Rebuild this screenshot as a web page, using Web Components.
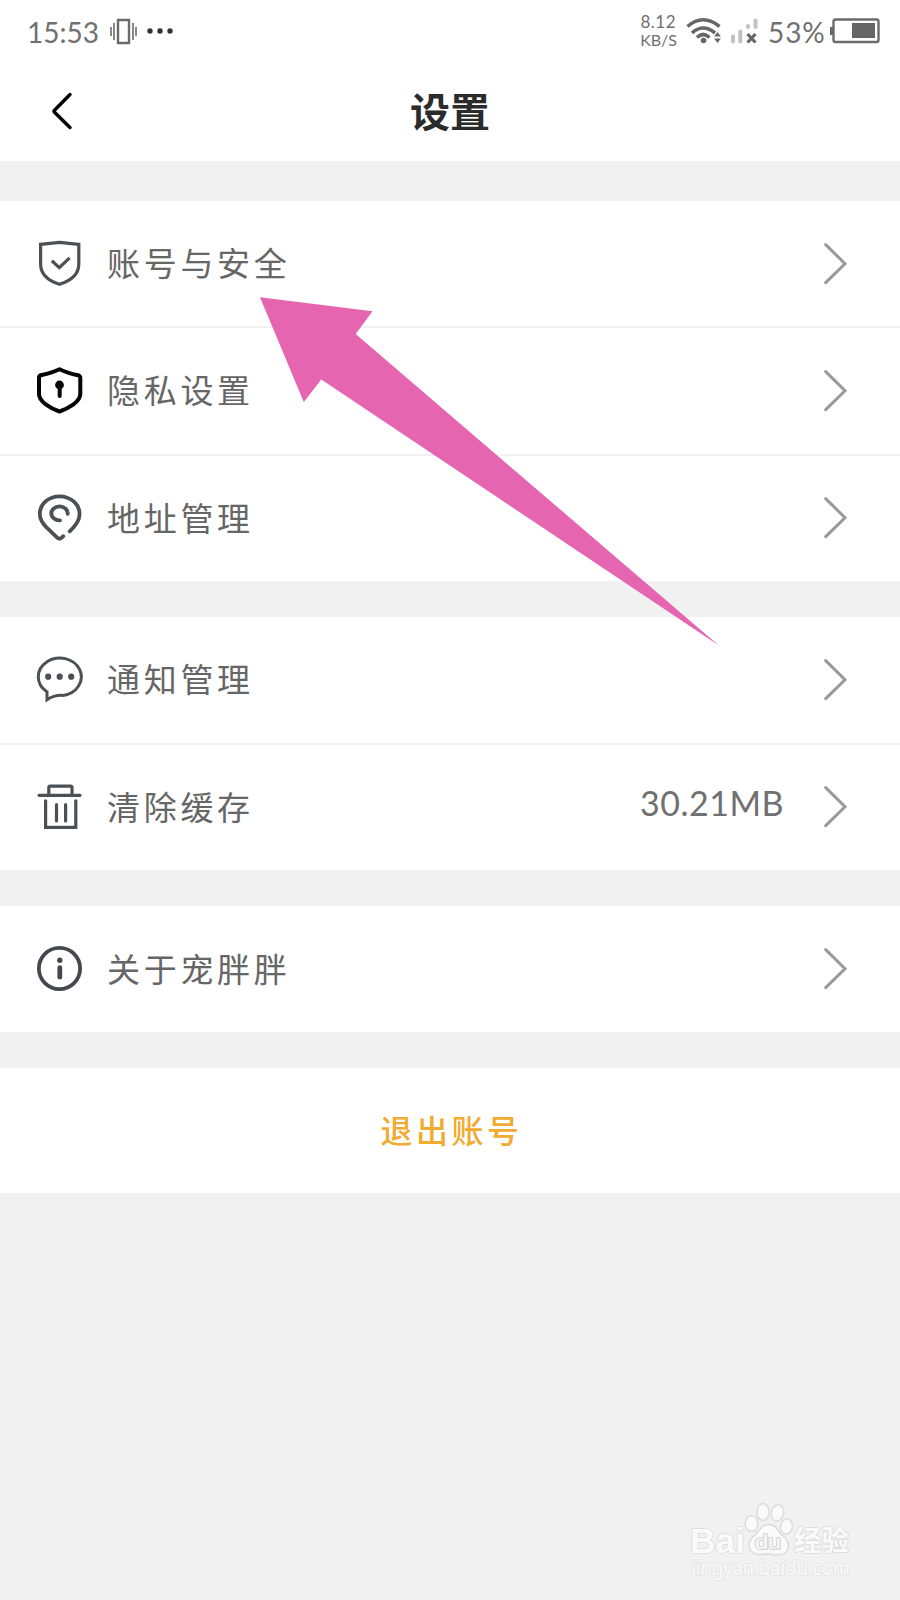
<!DOCTYPE html>
<html lang="zh-CN">
<head>
<meta charset="utf-8">
<title>设置</title>
<style>
    body {
        margin: 0;
        background: #f1f1f1;
        font-family: Lato, "Noto Sans CJK SC", sans-serif;
        color: #666;
    }
</style>
</head>
<body>
<settings-page>
    <status-bar slot="top" time="15:53" battery="53%"></status-bar>
    <nav-header slot="top">设置</nav-header>

    <settings-group style="height: 380px">
        <settings-row icon="shield">账号与安全</settings-row>
        <settings-row icon="lock">隐私设置</settings-row>
        <settings-row icon="pin">地址管理</settings-row>
    </settings-group>
    <settings-group style="height: 253px">
        <settings-row icon="chat">通知管理</settings-row>
        <settings-row icon="trash">清除缓存<span slot="value">30.21MB</span></settings-row>
    </settings-group>
    <settings-group style="height: 126px">
        <settings-row icon="info">关于宠胖胖</settings-row>
    </settings-group>
    <logout-button>退出账号</logout-button>

    <pointer-arrow slot="overlay"></pointer-arrow>
    <water-mark slot="overlay"></water-mark>
</settings-page>

<script>
const icons = {
    shield: `<g stroke="#4b5055" stroke-width="3.2"><path d="M4.6 5.3Q14 4.6 23.5 3.4Q33 4.6 42.8 5.3V25C42.8 36 34 42 23.5 45.3C13 42 4.6 36 4.6 25Z"/><path d="M15.8 21.8l7.5 6.8 10.3-9.8"/></g>`,
    lock: `<g stroke="#050505" stroke-width="4"><path stroke-linejoin="round" d="M23.5 3.2C17.5 6.2 10 8 4.8 9.2Q3 10 3 12V28C3 36 15 42.5 23.5 45.5C32 42.5 44.3 36 44.3 28V12Q44.3 10 42 9.2C36 8 29.5 6.2 23.5 3.2Z"/><path stroke-linecap="round" d="M23.7 20v10"/><circle cx="23.5" cy="19" r="2.4" fill="#050505"/></g>`,
    pin: `<g stroke="#4b5055" stroke-width="3.8" stroke-linecap="round"><path d="M27.3 43.2L25.3 45Q23.5 46.4 21.7 45L10 33.8C5.3 29 3.8 25.6 3.8 21C3.8 11 12.5 3.3 23.5 3.3S43.6 11 43.6 21C43.6 27.6 40 32.5 33.7 38.3"/><path d="M31.7 20.8A8.2 7 0 1 0 24 27.4"/></g>`,
    chat: `<g stroke="#4b5055" stroke-width="3"><path d="M10.5 36.6A21.5 18.8 0 1 1 27 40.4Q18.5 39.8 11 44.8V35.5"/></g><g fill="#4b5055"><circle cx="12.2" cy="21.7" r="3.1"/><circle cx="23.7" cy="21.7" r="3.1"/><circle cx="35.2" cy="21.7" r="3.1"/></g>`,
    trash: `<g stroke="#4b5055" stroke-width="3.2" stroke-linecap="round"><path d="M3 13.3H44M12.8 13V5.6Q12.8 4.2 14.2 4.2H34.5Q36 4.2 36 5.6V13M9.6 18.8V45.3H39.8V18.8M20.5 22.7V39M29.6 22.7V39"/></g>`,
    info: `<circle cx="23.5" cy="24.5" r="20.6" stroke="#43494f" stroke-width="3.8"/><circle cx="23.8" cy="16.2" r="2.7" fill="#43494f"/><path d="M23.8 23.7v9.5" stroke="#43494f" stroke-width="4.8" stroke-linecap="round"/>`
};

class SettingsPage extends HTMLElement {
    constructor() {
        super();
        this.attachShadow({ mode: 'open' });
        this.shadowRoot.innerHTML = `
            <style>
                :host {
                    display: block;
                    position: relative;
                    height: 1600px;
                    overflow: hidden;
                }
                main {
                    display: flex;
                    flex-direction: column;
                    gap: 36px;
                    padding-top: 40px;
                }
            </style>
            <slot name="top"></slot>
            <main><slot></slot></main>
            <slot name="overlay"></slot>
        `;
    }
}

class StatusBar extends HTMLElement {
    constructor() {
        super();
        this.attachShadow({ mode: 'open' });
        this.shadowRoot.innerHTML = `
            <style>
                :host {
                    display: flex;
                    align-items: center;
                    box-sizing: border-box;
                    height: 62px;
                    padding: 0 20px 0 27px;
                    background: #fff;
                    font-size: 28px;
                    color: #707070;
                }
                svg { display: block; flex: none; }
                .time { width: 82px; padding-top: 1px; box-sizing: border-box; white-space: nowrap; }
                .speed {
                    margin-left: auto;
                    width: 39px;
                    margin-right: 9px;
                    font-size: 16px;
                    line-height: 18px;
                    text-align: right;
                    white-space: nowrap;
                }
                .speed b { display: block; font-weight: 400; }
                .speed b:first-child { font-size: 17px; letter-spacing: 0.5px; margin-right: 1px; }
                .percent { width: 61px; margin-left: 10px; padding-top: 1px; letter-spacing: 0.9px; white-space: nowrap; }
            </style>
            <span class="time"></span>
            <svg width="66" height="28" viewBox="109 17 66 28" fill="none" stroke="#6b6b6b" stroke-width="2">
                <path d="M118 20h11v23h-11z" stroke-width="2.4"/>
                <path d="M111 27v9M114 23v17M133 23v17M136 27v9" stroke-width="1.6"/>
                <g fill="#333" stroke="none"><circle cx="150" cy="31" r="2.7"/><circle cx="160" cy="31" r="2.7"/><circle cx="170" cy="31" r="2.7"/></g>
            </svg>
            <span class="speed"><b>8.12</b><b>KB/S</b></span>
            <svg width="72" height="30" viewBox="686 16 72 30" fill="none" stroke="#666">
                <path d="M687.5 26.5Q703 13 719.5 26.5M692 33Q703 23 715 33M697 37.5Q703 31.5 709.5 37.5" stroke-width="3.6"/>
                <circle cx="703.5" cy="40.5" r="2.8" fill="#666" stroke="none"/>
                <path d="M717.5 32l3.4 4.5h-6.8zM717.5 43l3.4-4.5h-6.8z" fill="#666" stroke="none"/>
                <path d="M733 36.5v5M740.3 31.5v10M748 26v1M755.5 20.5v6.5" stroke="#c2c2c2" stroke-width="4" stroke-linecap="round"/>
                <path d="M747.5 34l8 8.5M755.5 34l-8 8.5" stroke-width="3.2"/>
            </svg>
            <span class="percent"></span>
            <svg width="51" height="28" viewBox="829 17 51 28" fill="none" stroke="#6b6b6b">
                <rect x="833.5" y="19.5" width="45" height="22.5" rx="2" stroke-width="2.4"/>
                <path d="M830 27h3v8h-3z" fill="#666" stroke="none"/>
                <path d="M852 23h23v15h-23z" fill="#666" stroke="none"/>
            </svg>
        `;
    }

    connectedCallback() {
        this.shadowRoot.querySelector('.time').textContent = this.getAttribute('time');
        this.shadowRoot.querySelector('.percent').textContent = this.getAttribute('battery');
    }
}

class NavHeader extends HTMLElement {
    constructor() {
        super();
        this.attachShadow({ mode: 'open' });
        this.shadowRoot.innerHTML = `
            <style>
                :host {
                    display: grid;
                    grid-template-columns: 100px 1fr 100px;
                    align-items: center;
                    height: 99px;
                    background: #fff;
                }
                svg { display: block; margin-left: 50px; }
                h1 {
                    margin: 0;
                    font-size: 40px;
                    line-height: 48px;
                    font-weight: 700;
                    text-align: center;
                    color: #2b2b2b;
                }
            </style>
            <svg width="24" height="40" fill="none" stroke="#000" stroke-width="3.4" stroke-linecap="round" stroke-linejoin="round"><path d="M20 2.5L4.5 18.2Q3.5 19.2 4.5 20.2L20 35.5"/></svg>
            <h1><slot></slot></h1>
        `;
    }
}

class SettingsGroup extends HTMLElement {
    constructor() {
        super();
        this.attachShadow({ mode: 'open' });
        this.shadowRoot.innerHTML = `
            <style>
                :host {
                    display: grid;
                    grid-auto-rows: 1fr;
                    gap: 2px;
                }
            </style>
            <slot></slot>
        `;
    }
}

class SettingsRow extends HTMLElement {
    constructor() {
        super();
        this.attachShadow({ mode: 'open' });
        this.shadowRoot.innerHTML = `
            <style>
                :host {
                    display: flex;
                    align-items: center;
                    padding: 0 52px 0 36px;
                    background: #fff;
                }
                svg { display: block; flex: none; }
                .icon { margin-top: -2px; }
                .label {
                    flex: 1;
                    margin: -1px 0 0 23px;
                    font-size: 33px;
                    line-height: 48px;
                    letter-spacing: 3.7px;
                }
                .value {
                    margin: -8px 39px 0 0;
                    font-size: 34px;
                    line-height: 40px;
                    letter-spacing: 0.5px;
                    color: #707070;
                }
            </style>
            <svg class="icon" width="48" height="48" fill="none">${icons[this.getAttribute('icon')]}</svg>
            <span class="label"><slot></slot></span>
            <span class="value"><slot name="value"></slot></span>
            <svg width="25" height="44" fill="none" stroke="#999" stroke-width="3" stroke-linecap="round"><path d="M2.7 2.6L22 21.8 2.7 40.6"/></svg>
        `;
    }
}

class LogoutButton extends HTMLElement {
    constructor() {
        super();
        this.attachShadow({ mode: 'open' });
        this.shadowRoot.innerHTML = `
            <style>
                :host {
                    display: flex;
                    align-items: center;
                    justify-content: center;
                    box-sizing: border-box;
                    height: 125px;
                    padding-bottom: 4px;
                    background: #fff;
                    color: #f0ab30;
                    font-size: 32px;
                    font-weight: 500;
                    letter-spacing: 3.5px;
                    text-indent: 3px;
                }
            </style>
            <slot></slot>
        `;
    }
}

// pink arrow on top of the list
class PointerArrow extends HTMLElement {
    constructor() {
        super();
        this.attachShadow({ mode: 'open' });
        this.shadowRoot.innerHTML = `
            <style>
                :host {
                    display: block;
                    position: absolute;
                    left: 260px;
                    top: 297px;
                }
                svg { display: block; }
            </style>
            <svg width="459" height="349" fill="#e565b0"><path d="M0 .3L112.5 14.3 95.7 37 458.5 348.3 61.3 82.5 43.8 105Z"/></svg>
        `;
    }
}

class WaterMark extends HTMLElement {
    constructor() {
        super();
        this.attachShadow({ mode: 'open' });
        this.shadowRoot.innerHTML = `
            <style>
                :host {
                    display: block;
                    position: absolute;
                    left: 685px;
                    top: 1500px;
                }
                svg { display: block; }
                text { paint-order: stroke; }
            </style>
            <svg width="175" height="84" fill="#fafafa" stroke="#dcdcdc" stroke-width="1.6" stroke-linejoin="round">
                <text x="5" y="53" font-family="Liberation Sans" font-weight="700" font-size="35" textLength="55" lengthAdjust="spacingAndGlyphs">Bai</text>
                <ellipse cx="66.5" cy="23.5" rx="6.3" ry="8"/>
                <ellipse cx="78" cy="12" rx="6" ry="8.5"/>
                <ellipse cx="92.5" cy="13" rx="6.2" ry="8.2" transform="rotate(12 92.5 13)"/>
                <ellipse cx="101.5" cy="26.5" rx="6" ry="7.5" transform="rotate(8 101.5 26.5)"/>
                <path d="M83.5 24.5C76 24.5 74 32 68 37C62 42 62.5 55 75 54.5C80 54 86 54 91 55C105 56 106 43 99 37C92 31 92 24.5 83.5 24.5Z"/>
                <text x="70" y="49" font-family="Liberation Sans" font-size="21" stroke="#d4d4d4" stroke-width="2.2" textLength="26" lengthAdjust="spacingAndGlyphs">du</text>
                <text x="109" y="51" font-family="Noto Sans CJK SC" font-weight="700" font-size="28" textLength="55" lengthAdjust="spacingAndGlyphs">经验</text>
                <text x="6" y="75" font-family="Noto Sans" font-size="19" stroke="#e3e3e3" textLength="159" lengthAdjust="spacingAndGlyphs">jingyan.baidu.com</text>
            </svg>
        `;
    }
}

window.customElements.define('settings-page', SettingsPage);
window.customElements.define('status-bar', StatusBar);
window.customElements.define('nav-header', NavHeader);
window.customElements.define('settings-group', SettingsGroup);
window.customElements.define('settings-row', SettingsRow);
window.customElements.define('logout-button', LogoutButton);
window.customElements.define('pointer-arrow', PointerArrow);
window.customElements.define('water-mark', WaterMark);
</script>
</body>
</html>
